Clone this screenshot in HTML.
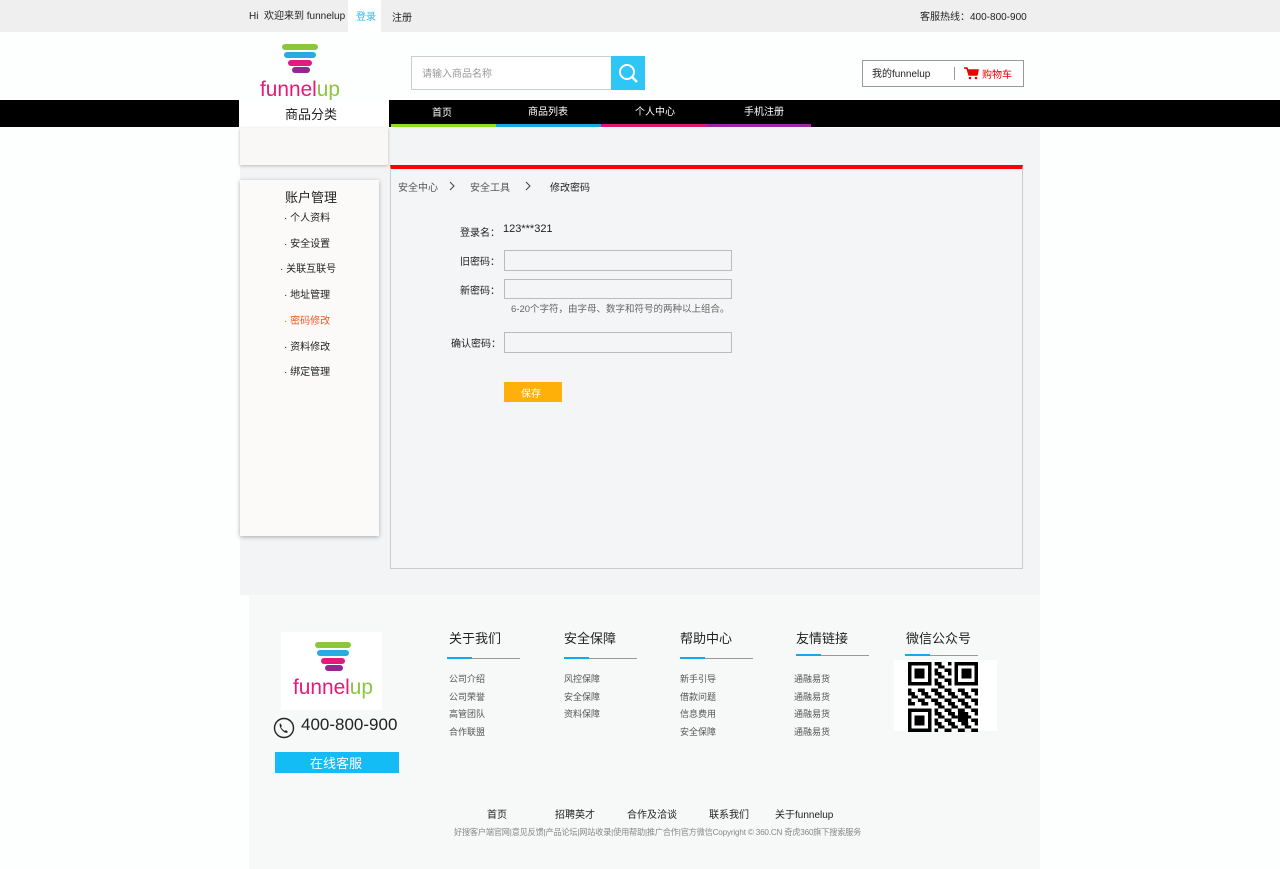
<!DOCTYPE html>
<html><head><meta charset="utf-8"><style>
*{margin:0;padding:0;box-sizing:border-box}
body{width:1280px;height:869px;position:relative;background:#fdfefe;font-family:"Liberation Sans","Noto Sans CJK SC",sans-serif;font-size:10px;color:#222;overflow:hidden}
.a{position:absolute}
.t{white-space:nowrap;margin-top:-2px}
</style></head><body>
<!-- top bar -->
<div class="a" style="left:0;top:0;width:1280px;height:32px;background:#efefef"></div>
<div class="a t" style="left:249px;top:9px;font-size:10px">Hi&nbsp; 欢迎来到 funnelup</div>
<div class="a" style="left:348px;top:0;width:33px;height:32px;background:#fff"></div>
<div class="a t" style="left:356px;top:10px;color:#2cb8ec">登录</div>
<div class="a t" style="left:392px;top:11px">注册</div>
<div class="a t" style="left:920px;top:10px">客服热线：400-800-900</div>
<!-- header -->
<svg class="a" style="left:250px;top:40px" width="100" height="60">
<rect x="32" y="4" width="36" height="6" rx="3" fill="#8cc63f"/>
<rect x="34" y="12" width="32" height="6" rx="3" fill="#29abe2"/>
<rect x="38" y="20" width="24" height="6" rx="3" fill="#e6197a"/>
<rect x="42" y="27" width="18" height="6" rx="3" fill="#93278f"/>
<text x="10" y="56" font-size="21" font-family="Liberation Sans" textLength="80" lengthAdjust="spacingAndGlyphs" fill="#e6197a">funnel<tspan fill="#8cc63f">up</tspan></text>
</svg>
<div class="a" style="left:411px;top:56px;width:201px;height:34px;border:1px solid #ccc;background:#fff"></div>
<div class="a t" style="left:422px;top:67px;color:#999">请输入商品名称</div>
<div class="a" style="left:611px;top:56px;width:34px;height:34px;background:#2ec6f5"></div>
<svg class="a" style="left:611px;top:56px" width="34" height="34"><circle cx="16" cy="16" r="7" stroke="#fff" stroke-width="2" fill="none"/><line x1="21" y1="21" x2="26" y2="26" stroke="#fff" stroke-width="2.5"/></svg>
<div class="a" style="left:862px;top:60px;width:162px;height:27px;border:1px solid #999;background:#fff"></div>
<div class="a t" style="left:872px;top:67px">我的funnelup</div>
<div class="a" style="left:954px;top:67px;width:1px;height:13px;background:#999"></div>
<svg class="a" style="left:963px;top:66px" width="16" height="14"><path d="M1 2h3l2 7h8l1-5H5" stroke="#e00" stroke-width="1.5" fill="#e00"/><circle cx="7" cy="12" r="1.3" fill="#e00"/><circle cx="13" cy="12" r="1.3" fill="#e00"/></svg>
<div class="a t" style="left:982px;top:68px;color:#e00">购物车</div>
<!-- nav -->
<div class="a" style="left:0;top:100px;width:1280px;height:27px;background:#000"></div>
<div class="a" style="left:239px;top:100px;width:150px;height:28px;background:#fff"></div>
<div class="a t" style="left:285px;top:106px;font-size:13px">商品分类</div>
<div class="a" style="left:240px;top:128px;width:148px;height:37px;background:#f9f8f6;box-shadow:0 1px 3px #bbb"></div>
<div class="a t" style="left:432px;top:106px;color:#fff">首页</div>
<div class="a t" style="left:528px;top:105px;color:#fff">商品列表</div>
<div class="a t" style="left:635px;top:105px;color:#fff">个人中心</div>
<div class="a t" style="left:744px;top:105px;color:#fff">手机注册</div>
<div class="a" style="left:391px;top:124px;width:105px;height:3px;background:#8ee122"></div>
<div class="a" style="left:496px;top:124px;width:105px;height:3px;background:#1aa6e0"></div>
<div class="a" style="left:601px;top:124px;width:105px;height:3px;background:#e0166f"></div>
<div class="a" style="left:706px;top:124px;width:105px;height:3px;background:#9b27a3"></div>
<!-- main -->
<div class="a" style="left:240px;top:128px;width:800px;height:467px;background:#f2f4f5;z-index:-1"></div>
<div class="a" style="left:240px;top:180px;width:139px;height:356px;background:#fbfaf9;box-shadow:0 1px 4px #aaa"></div>
<div class="a t" style="left:285px;top:189px;font-size:13px">账户管理</div>
<div class="a t" style="left:284px;top:211px">· 个人资料</div>
<div class="a t" style="left:284px;top:237px">· 安全设置</div>
<div class="a t" style="left:280px;top:262px">· 关联互联号</div>
<div class="a t" style="left:284px;top:288px">· 地址管理</div>
<div class="a t" style="left:284px;top:314px;color:#f05a1e">· 密码修改</div>
<div class="a t" style="left:284px;top:340px">· 资料修改</div>
<div class="a t" style="left:284px;top:365px">· 绑定管理</div>
<div class="a" style="left:390px;top:165px;width:633px;height:404px;border:1px solid #ccc;border-top:4px solid #f00;background:#f3f5f6"></div>
<div class="a t" style="left:398px;top:181px;color:#555">安全中心</div>
<svg class="a" style="left:448px;top:181px" width="8" height="10"><path d="M2 1l4 4-4 4" stroke="#444" fill="none"/></svg>
<div class="a t" style="left:470px;top:181px;color:#555">安全工具</div>
<svg class="a" style="left:524px;top:181px" width="8" height="10"><path d="M2 1l4 4-4 4" stroke="#444" fill="none"/></svg>
<div class="a t" style="left:550px;top:181px">修改密码</div>
<div class="a t" style="left:460px;top:226px">登录名：</div>
<div class="a t" style="left:503px;top:225px;font-size:11px">123***321</div>
<div class="a t" style="left:460px;top:255px">旧密码：</div>
<div class="a" style="left:504px;top:250px;width:228px;height:21px;border:1px solid #bbb;background:#f3f5f6"></div>
<div class="a t" style="left:460px;top:284px">新密码：</div>
<div class="a" style="left:504px;top:279px;width:228px;height:20px;border:1px solid #bbb;background:#f3f5f6"></div>
<div class="a t" style="left:511px;top:303px;color:#666;font-size:9.5px">6-20个字符，由字母、数字和符号的两种以上组合。</div>
<div class="a t" style="left:451px;top:337px">确认密码：</div>
<div class="a" style="left:504px;top:332px;width:228px;height:21px;border:1px solid #bbb;background:#f3f5f6"></div>
<div class="a" style="left:504px;top:382px;width:58px;height:20px;background:#ffb008"></div>
<div class="a t" style="left:521px;top:387px;color:#fff">保存</div>
<!-- footer -->
<div class="a" style="left:249px;top:595px;width:791px;height:274px;background:#f7f8f8"></div>
<div class="a" style="left:281px;top:632px;width:101px;height:78px;background:#fff"></div>
<svg class="a" style="left:281px;top:632px" width="101" height="78">
<rect x="34" y="10" width="36" height="6" rx="3" fill="#8cc63f"/>
<rect x="36" y="18" width="32" height="6" rx="3" fill="#29abe2"/>
<rect x="40" y="26" width="24" height="6" rx="3" fill="#e6197a"/>
<rect x="44" y="33" width="18" height="6" rx="3" fill="#93278f"/>
<text x="12" y="62" font-size="21" font-family="Liberation Sans" textLength="80" lengthAdjust="spacingAndGlyphs" fill="#e6197a">funnel<tspan fill="#8cc63f">up</tspan></text>
</svg>
<svg class="a" style="left:273px;top:717px" width="22" height="22"><circle cx="11" cy="11" r="9.5" stroke="#222" stroke-width="1.4" fill="none"/><path d="M7 6c-1 2 0 6 4 9 2 1 3 1 4 0l-2-2-1 1c-2-1-3-2-4-4l1-1-2-3z" fill="#222"/></svg>
<div class="a t" style="left:301px;top:717px;font-size:17px">400-800-900</div>
<div class="a" style="left:275px;top:752px;width:124px;height:21px;background:#14bcf5"></div>
<div class="a t" style="left:310px;top:755px;color:#fff;font-size:13px">在线客服</div>
<div class="a t" style="left:449px;top:630px;font-size:13px">关于我们</div>
<div class="a t" style="left:564px;top:630px;font-size:13px">安全保障</div>
<div class="a t" style="left:680px;top:630px;font-size:13px">帮助中心</div>
<div class="a t" style="left:796px;top:630px;font-size:13px">友情链接</div>
<div class="a t" style="left:906px;top:630px;font-size:13px">微信公众号</div>
<div class="a" style="left:447px;top:658px;width:73px;height:1px;background:#999"></div><div class="a" style="left:447px;top:657px;width:25px;height:2px;background:#14a8ec"></div>
<div class="a" style="left:564px;top:658px;width:73px;height:1px;background:#999"></div><div class="a" style="left:564px;top:657px;width:25px;height:2px;background:#14a8ec"></div>
<div class="a" style="left:680px;top:658px;width:73px;height:1px;background:#999"></div><div class="a" style="left:680px;top:657px;width:25px;height:2px;background:#14a8ec"></div>
<div class="a" style="left:796px;top:655px;width:73px;height:1px;background:#999"></div><div class="a" style="left:796px;top:654px;width:25px;height:2px;background:#14a8ec"></div>
<div class="a" style="left:905px;top:655px;width:73px;height:1px;background:#999"></div><div class="a" style="left:905px;top:654px;width:25px;height:2px;background:#14a8ec"></div>
<div class="a" style="left:449px;top:671px;color:#555;font-size:9px;line-height:17.5px">公司介绍<br>公司荣誉<br>高管团队<br>合作联盟</div>
<div class="a" style="left:564px;top:671px;color:#555;font-size:9px;line-height:17.5px">风控保障<br>安全保障<br>资料保障</div>
<div class="a" style="left:680px;top:671px;color:#555;font-size:9px;line-height:17.5px">新手引导<br>借款问题<br>信息费用<br>安全保障</div>
<div class="a" style="left:794px;top:671px;color:#555;font-size:9px;line-height:17.5px">通融易货<br>通融易货<br>通融易货<br>通融易货</div>
<div class="a" style="left:894px;top:660px;width:103px;height:71px;background:#fff"></div>
<svg class="a" style="left:908px;top:662px" width="70" height="70" viewBox="0 0 21 21" shape-rendering="crispEdges">
<defs><pattern id="p" width="4" height="3" patternUnits="userSpaceOnUse"><rect width="2" height="1" fill="#000"/><rect x="1" y="1" width="2" height="1" fill="#000"/><rect x="3" y="2" width="1" height="1" fill="#000"/><rect x="0" y="2" width="1" height="1" fill="#000"/></pattern></defs>
<rect width="21" height="21" fill="url(#p)"/>
<g fill="#fff"><rect x="0" y="0" width="8" height="8"/><rect x="13" y="0" width="8" height="8"/><rect x="0" y="13" width="8" height="8"/></g>
<g fill="none" stroke="#000"><rect x="0.5" y="0.5" width="6" height="6"/><rect x="14.5" y="0.5" width="6" height="6"/><rect x="0.5" y="14.5" width="6" height="6"/></g>
<g fill="#000"><rect x="2" y="2" width="3" height="3"/><rect x="16" y="2" width="3" height="3"/><rect x="2" y="16" width="3" height="3"/><rect x="15" y="15" width="3" height="3"/></g>
</svg>
<div class="a t" style="left:487px;top:808px">首页</div>
<div class="a t" style="left:555px;top:808px">招聘英才</div>
<div class="a t" style="left:627px;top:808px">合作及洽谈</div>
<div class="a t" style="left:709px;top:808px">联系我们</div>
<div class="a t" style="left:775px;top:808px">关于funnelup</div>
<div class="a t" style="left:454px;top:828px;color:#888;font-size:8.5px;letter-spacing:-0.2px;transform:scaleX(0.96);transform-origin:left">好搜客户端官网|意见反馈|产品论坛|网站收录|使用帮助|推广合作|官方微信Copyright © 360.CN 奇虎360旗下搜索服务</div>
</body></html>
